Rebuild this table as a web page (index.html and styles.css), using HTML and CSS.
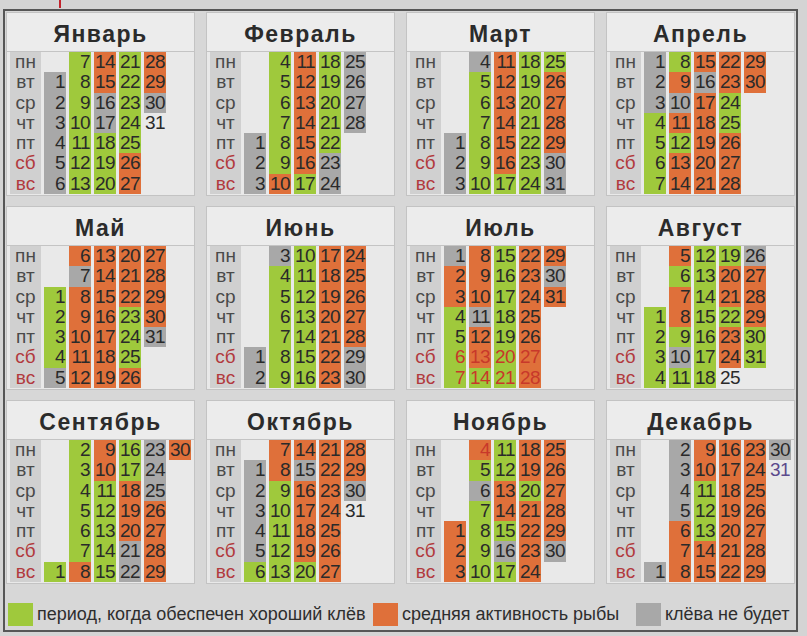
FILE: index.html
```html
<!DOCTYPE html>
<html lang="ru">
<head>
<meta charset="utf-8">
<title>Календарь клёва</title>
<link rel="stylesheet" href="styles.css">
</head>
<body>
<div class="tick"></div>
<div class="frame">
  <div class="months">

    <div class="month"><div class="title">Январь</div><div class="days">
      <div class="labels"><span>пн</span><span>вт</span><span>ср</span><span>чт</span><span>пт</span><span class="we">сб</span><span class="we">вс</span></div>
      <i></i><i class="s">1</i><i class="s">2</i><i class="s">3</i><i class="s">4</i><i class="s">5</i><i class="s">6</i>
      <i class="g">7</i><i class="g">8</i><i class="g">9</i><i class="g">10</i><i class="g">11</i><i class="g">12</i><i class="g">13</i>
      <i class="o">14</i><i class="o">15</i><i class="s">16</i><i class="s">17</i><i class="g">18</i><i class="g">19</i><i class="g">20</i>
      <i class="g">21</i><i class="g">22</i><i class="g">23</i><i class="g">24</i><i class="g">25</i><i class="o">26</i><i class="o">27</i>
      <i class="o">28</i><i class="o">29</i><i class="s">30</i><i>31</i>
    </div></div>

    <div class="month"><div class="title">Февраль</div><div class="days">
      <div class="labels"><span>пн</span><span>вт</span><span>ср</span><span>чт</span><span>пт</span><span class="we">сб</span><span class="we">вс</span></div>
      <i></i><i></i><i></i><i></i><i class="s">1</i><i class="s">2</i><i class="s">3</i>
      <i class="g">4</i><i class="g">5</i><i class="g">6</i><i class="g">7</i><i class="g">8</i><i class="g">9</i><i class="o">10</i>
      <i class="o">11</i><i class="o">12</i><i class="o">13</i><i class="o">14</i><i class="o">15</i><i class="o">16</i><i class="g">17</i>
      <i class="g">18</i><i class="g">19</i><i class="g">20</i><i class="g">21</i><i class="g">22</i><i class="s">23</i><i class="s">24</i>
      <i class="s">25</i><i class="s">26</i><i class="s">27</i><i class="s">28</i>
    </div></div>

    <div class="month"><div class="title">Март</div><div class="days">
      <div class="labels"><span>пн</span><span>вт</span><span>ср</span><span>чт</span><span>пт</span><span class="we">сб</span><span class="we">вс</span></div>
      <i></i><i></i><i></i><i></i><i class="s">1</i><i class="s">2</i><i class="s">3</i>
      <i class="s">4</i><i class="g">5</i><i class="g">6</i><i class="g">7</i><i class="g">8</i><i class="g">9</i><i class="g">10</i>
      <i class="o">11</i><i class="o">12</i><i class="o">13</i><i class="o">14</i><i class="o">15</i><i class="o">16</i><i class="g">17</i>
      <i class="g">18</i><i class="g">19</i><i class="g">20</i><i class="g">21</i><i class="g">22</i><i class="g">23</i><i class="g">24</i>
      <i class="g">25</i><i class="o">26</i><i class="o">27</i><i class="o">28</i><i class="o">29</i><i class="s">30</i><i class="s">31</i>
    </div></div>

    <div class="month"><div class="title">Апрель</div><div class="days">
      <div class="labels"><span>пн</span><span>вт</span><span>ср</span><span>чт</span><span>пт</span><span class="we">сб</span><span class="we">вс</span></div>
      <i class="s">1</i><i class="s">2</i><i class="s">3</i><i class="g">4</i><i class="g">5</i><i class="g">6</i><i class="g">7</i>
      <i class="g">8</i><i class="o">9</i><i class="s">10</i><i class="o">11</i><i class="g">12</i><i class="o">13</i><i class="o">14</i>
      <i class="o">15</i><i class="s">16</i><i class="o">17</i><i class="o">18</i><i class="o">19</i><i class="o">20</i><i class="o">21</i>
      <i class="o">22</i><i class="o">23</i><i class="g">24</i><i class="g">25</i><i class="o">26</i><i class="o">27</i><i class="o">28</i>
      <i class="o">29</i><i class="o">30</i>
    </div></div>

    <div class="month"><div class="title">Май</div><div class="days">
      <div class="labels"><span>пн</span><span>вт</span><span>ср</span><span>чт</span><span>пт</span><span class="we">сб</span><span class="we">вс</span></div>
      <i></i><i></i><i class="g">1</i><i class="g">2</i><i class="g">3</i><i class="g">4</i><i class="s">5</i>
      <i class="o">6</i><i class="s">7</i><i class="o">8</i><i class="o">9</i><i class="o">10</i><i class="o">11</i><i class="o">12</i>
      <i class="o">13</i><i class="o">14</i><i class="o">15</i><i class="o">16</i><i class="o">17</i><i class="o">18</i><i class="o">19</i>
      <i class="o">20</i><i class="o">21</i><i class="o">22</i><i class="g">23</i><i class="g">24</i><i class="g">25</i><i class="o">26</i>
      <i class="o">27</i><i class="o">28</i><i class="o">29</i><i class="o">30</i><i class="s">31</i>
    </div></div>

    <div class="month"><div class="title">Июнь</div><div class="days">
      <div class="labels"><span>пн</span><span>вт</span><span>ср</span><span>чт</span><span>пт</span><span class="we">сб</span><span class="we">вс</span></div>
      <i></i><i></i><i></i><i></i><i></i><i class="s">1</i><i class="s">2</i>
      <i class="s">3</i><i class="g">4</i><i class="g">5</i><i class="g">6</i><i class="g">7</i><i class="g">8</i><i class="g">9</i>
      <i class="g">10</i><i class="g">11</i><i class="g">12</i><i class="g">13</i><i class="g">14</i><i class="g">15</i><i class="g">16</i>
      <i class="o">17</i><i class="o">18</i><i class="o">19</i><i class="o">20</i><i class="o">21</i><i class="o">22</i><i class="o">23</i>
      <i class="o">24</i><i class="o">25</i><i class="o">26</i><i class="o">27</i><i class="o">28</i><i class="s">29</i><i class="s">30</i>
    </div></div>

    <div class="month"><div class="title">Июль</div><div class="days">
      <div class="labels"><span>пн</span><span>вт</span><span>ср</span><span>чт</span><span>пт</span><span class="we">сб</span><span class="we">вс</span></div>
      <i class="s">1</i><i class="o">2</i><i class="o">3</i><i class="g">4</i><i class="g">5</i><i class="g r">6</i><i class="g r">7</i>
      <i class="o">8</i><i class="o">9</i><i class="o">10</i><i class="s">11</i><i class="o">12</i><i class="o r">13</i><i class="g r">14</i>
      <i class="g">15</i><i class="g">16</i><i class="g">17</i><i class="g">18</i><i class="g">19</i><i class="g r">20</i><i class="g r">21</i>
      <i class="o">22</i><i class="o">23</i><i class="o">24</i><i class="o">25</i><i class="o">26</i><i class="o r">27</i><i class="o r">28</i>
      <i class="o">29</i><i class="s">30</i><i class="o">31</i>
    </div></div>

    <div class="month"><div class="title">Август</div><div class="days">
      <div class="labels"><span>пн</span><span>вт</span><span>ср</span><span>чт</span><span>пт</span><span class="we">сб</span><span class="we">вс</span></div>
      <i></i><i></i><i></i><i class="g">1</i><i class="g">2</i><i class="g">3</i><i class="g">4</i>
      <i class="o">5</i><i class="g">6</i><i class="o">7</i><i class="o">8</i><i class="g">9</i><i class="s">10</i><i class="g">11</i>
      <i class="g">12</i><i class="g">13</i><i class="g">14</i><i class="g">15</i><i class="g">16</i><i class="g">17</i><i class="g">18</i>
      <i class="g">19</i><i class="o">20</i><i class="o">21</i><i class="g">22</i><i class="o">23</i><i class="o">24</i><i>25</i>
      <i class="s">26</i><i class="o">27</i><i class="o">28</i><i class="o">29</i><i class="g">30</i><i class="g">31</i>
    </div></div>

    <div class="month"><div class="title">Сентябрь</div><div class="days">
      <div class="labels"><span>пн</span><span>вт</span><span>ср</span><span>чт</span><span>пт</span><span class="we">сб</span><span class="we">вс</span></div>
      <i></i><i></i><i></i><i></i><i></i><i></i><i class="g">1</i>
      <i class="g">2</i><i class="g">3</i><i class="g">4</i><i class="g">5</i><i class="g">6</i><i class="g">7</i><i class="o">8</i>
      <i class="o">9</i><i class="o">10</i><i class="g">11</i><i class="g">12</i><i class="g">13</i><i class="g">14</i><i class="g">15</i>
      <i class="g">16</i><i class="g">17</i><i class="o">18</i><i class="o">19</i><i class="o">20</i><i class="s">21</i><i class="s">22</i>
      <i class="s">23</i><i class="s">24</i><i class="s">25</i><i class="o">26</i><i class="o">27</i><i class="o">28</i><i class="o">29</i>
      <i class="o">30</i>
    </div></div>

    <div class="month"><div class="title">Октябрь</div><div class="days">
      <div class="labels"><span>пн</span><span>вт</span><span>ср</span><span>чт</span><span>пт</span><span class="we">сб</span><span class="we">вс</span></div>
      <i></i><i class="s">1</i><i class="s">2</i><i class="s">3</i><i class="s">4</i><i class="s">5</i><i class="g">6</i>
      <i class="o">7</i><i class="o">8</i><i class="g">9</i><i class="g">10</i><i class="g">11</i><i class="g">12</i><i class="g">13</i>
      <i class="o">14</i><i class="s">15</i><i class="o">16</i><i class="o">17</i><i class="o">18</i><i class="o">19</i><i class="g">20</i>
      <i class="o">21</i><i class="o">22</i><i class="o">23</i><i class="o">24</i><i class="o">25</i><i class="o">26</i><i class="o">27</i>
      <i class="o">28</i><i class="o">29</i><i class="s">30</i><i>31</i>
    </div></div>

    <div class="month"><div class="title">Ноябрь</div><div class="days">
      <div class="labels"><span>пн</span><span>вт</span><span>ср</span><span>чт</span><span>пт</span><span class="we">сб</span><span class="we">вс</span></div>
      <i></i><i></i><i></i><i></i><i class="o">1</i><i class="o">2</i><i class="o">3</i>
      <i class="o r">4</i><i class="g">5</i><i class="s">6</i><i class="g">7</i><i class="g">8</i><i class="g">9</i><i class="g">10</i>
      <i class="g">11</i><i class="g">12</i><i class="o">13</i><i class="o">14</i><i class="g">15</i><i class="s">16</i><i class="g">17</i>
      <i class="o">18</i><i class="o">19</i><i class="g">20</i><i class="o">21</i><i class="o">22</i><i class="o">23</i><i class="o">24</i>
      <i class="o">25</i><i class="o">26</i><i class="o">27</i><i class="o">28</i><i class="o">29</i><i class="s">30</i>
    </div></div>

    <div class="month"><div class="title">Декабрь</div><div class="days">
      <div class="labels"><span>пн</span><span>вт</span><span>ср</span><span>чт</span><span>пт</span><span class="we">сб</span><span class="we">вс</span></div>
      <i></i><i></i><i></i><i></i><i></i><i></i><i class="s">1</i>
      <i class="s">2</i><i class="s">3</i><i class="s">4</i><i class="s">5</i><i class="o">6</i><i class="o">7</i><i class="o">8</i>
      <i class="o">9</i><i class="o">10</i><i class="g">11</i><i class="g">12</i><i class="g">13</i><i class="o">14</i><i class="o">15</i>
      <i class="o">16</i><i class="o">17</i><i class="o">18</i><i class="o">19</i><i class="o">20</i><i class="o">21</i><i class="o">22</i>
      <i class="o">23</i><i class="o">24</i><i class="o">25</i><i class="o">26</i><i class="o">27</i><i class="o">28</i><i class="o">29</i>
      <i class="s">30</i><i class="p">31</i>
    </div></div>

  </div>

  <div class="legend">
    <div class="item item-good"><span class="sw g"></span><span class="lt">период, когда обеспечен хороший клёв</span></div>
    <div class="item item-mid"><span class="sw o"></span><span class="lt">средняя активность рыбы</span></div>
    <div class="item"><span class="sw s"></span><span class="lt">клёва не будет</span></div>
  </div>
</div>
</body>
</html>
```

FILE: styles.css
```css
html, body {
  margin: 0;
  padding: 0;
}

body {
  width: 807px;
  height: 636px;
  overflow: hidden;
  position: relative;
  background: #d4d4d4;
  font-family: "Liberation Sans", Arial, sans-serif;
  color: #2a2a2a;
}

.tick {
  position: absolute;
  left: 59px;
  top: 0;
  width: 2px;
  height: 8px;
  background: #c2232c;
}

.frame {
  box-sizing: border-box;
  margin: 9px 0 0 3px;
  width: 795px;
  height: 623px;
  border: 2px solid #565656;
  padding: 1px 0 0 1px;
  background: #d7d7d7;
}

.months {
  display: grid;
  grid-template-columns: repeat(4, 189px);
  column-gap: 11px;
  row-gap: 10px;
}

.month {
  box-sizing: border-box;
  height: 184px;
  background: #e9e9e9;
  border: 1px solid #c3c3c3;
  display: flex;
  flex-direction: column;
}

.title {
  height: 39px;
  flex: none;
  border-bottom: 1px solid #c4c4c4;
  background: #ececec;
  display: flex;
  align-items: center;
  justify-content: center;
  padding-top: 4px;
  box-sizing: border-box;
  font-weight: bold;
  font-size: 23px;
  letter-spacing: 1.5px;
  color: #2b2b2b;
}

.days {
  display: grid;
  grid-template-columns: 31px repeat(6, 22px);
  grid-template-rows: repeat(7, 20.3px);
  grid-auto-flow: column;
  column-gap: 3px;
  padding-left: 3px;
  font-size: 19px;
}

.labels {
  grid-row: 1 / 8;
  background: #d0d0d0;
  display: grid;
  grid-template-rows: repeat(7, 1fr);
}

.labels span {
  text-align: center;
  line-height: 20.3px;
  color: #4a4a4a;
}

.labels .we {
  color: #b23a3e;
}

.days i {
  font-style: normal;
  text-align: right;
  padding-right: 1px;
  line-height: 20.3px;
  letter-spacing: -0.6px;
  color: #2a2a2a;
  white-space: nowrap;
}

.g { background: #9fc93c; }
.o { background: #df703a; }
.s { background: #a8a8a8; }

.days i.r { color: #c8382a; }
.days i.p { color: #5b4a8c; }

.legend {
  display: flex;
  align-items: center;
  margin-top: 19px;
  padding-left: 2px;
  font-size: 18px;
  color: #2e2e2e;
  white-space: nowrap;
}

.item {
  display: flex;
  align-items: center;
}

.item-good {
  width: 365px;
}

.item-mid {
  width: 263px;
}

.sw {
  width: 25px;
  height: 23px;
  margin-right: 4px;
  flex: none;
}
```
